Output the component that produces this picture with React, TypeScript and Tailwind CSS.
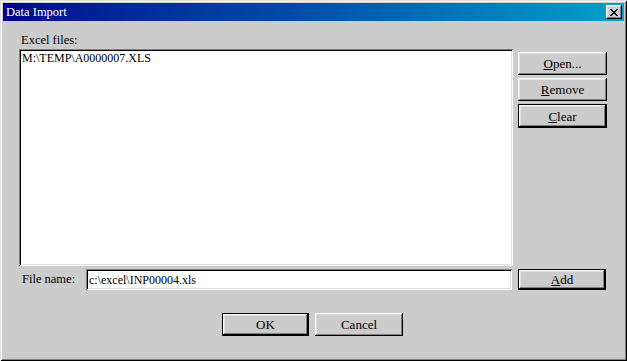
const FONT = { fontFamily: '"Liberation Serif", "Times New Roman", serif' };

function Btn({
  children,
  isDefault,
  className = "",
}: {
  children: React.ReactNode;
  isDefault?: boolean;
  className?: string;
}) {
  const bevel =
    "shadow-[inset_-1px_-1px_#000,inset_1px_1px_#fff,inset_-2px_-2px_#808080,inset_2px_2px_#dfdfdf]";
  if (isDefault) {
    return (
      <div className={`border border-black ${className}`}>
        <div
          className={`flex h-full w-full items-center justify-center bg-[#cccccc] text-[13px] leading-none text-black ${bevel}`}
        >
          {children}
        </div>
      </div>
    );
  }
  return (
    <div
      className={`flex items-center justify-center bg-[#cccccc] text-[13px] leading-none text-black ${bevel} ${className}`}
    >
      {children}
    </div>
  );
}

const sunken =
  "bg-white shadow-[inset_1px_1px_#808080,inset_-1px_-1px_#fff,inset_2px_2px_#000,inset_-2px_-2px_#dfdfdf]";

export default function App() {
  return (
    <div
      className="flex h-[361px] w-[627px] flex-col bg-[#cccccc] p-[3px] shadow-[inset_1px_1px_#dfdfdf,inset_-1px_-1px_#000,inset_2px_2px_#fff,inset_-2px_-2px_#808080]"
      style={FONT}
    >
      {/* title bar */}
      <div className="flex h-[18px] items-center justify-between bg-linear-to-r from-[#00008c] via-[#0048aa] via-45% to-[#0aa0c8] pl-[3px] pr-[2px]">
        <span className="text-[12.5px] leading-none text-white">Data Import</span>
        <div className="flex h-[14px] w-[16px] items-center justify-center bg-[#cccccc] shadow-[inset_-1px_-1px_#000,inset_1px_1px_#fff,inset_-2px_-2px_#808080,inset_2px_2px_#dfdfdf]">
          <svg width="8" height="7" viewBox="0 0 8 7" shapeRendering="crispEdges">
            <path
              d="M0 0h2v1h-2zM6 0h2v1h-2zM1 1h2v1h-2zM5 1h2v1h-2zM2 2h4v1h-4zM3 3h2v1h-2zM2 4h4v1h-4zM1 5h2v1h-2zM5 5h2v1h-2zM0 6h2v1h-2zM6 6h2v1h-2z"
              fill="#000"
            />
          </svg>
        </div>
      </div>

      {/* body */}
      <div className="flex flex-1 flex-col pl-[16px] pt-[13px]">
        <div className="grid grid-cols-[494px_89px] gap-x-[5px]">
          <div className="h-[15px] pl-[2px] text-[12.5px] leading-none text-black">Excel files:</div>
          <div />

          <div className={`h-[217px] px-[3px] pt-[3px] ${sunken}`}>
            <div className="text-[12px] leading-none text-black">M:\TEMP\A0000007.XLS</div>
          </div>
          <div className="flex flex-col gap-[3px] pt-[3px]">
            <Btn className="h-[23px]">
              <span>
                <u>O</u>pen...
              </span>
            </Btn>
            <Btn className="h-[23px]">
              <span>
                <u>R</u>emove
              </span>
            </Btn>
            <Btn isDefault className="h-[24px]">
              <span>
                <u>C</u>lear
              </span>
            </Btn>
          </div>

          <div className="mt-[3px] flex items-center">
            <span className="w-[67px] pl-[3px] text-[12.5px] leading-none text-black">File name:</span>
            <div className={`flex h-[21px] flex-1 items-center pl-[3px] ${sunken}`}>
              <span className="text-[12px] leading-none text-black">c:\excel\INP00004.xls</span>
            </div>
            <div className="w-[1px]" />
          </div>
          <div className="mt-[3px]">
            <Btn isDefault className="h-[21px] w-[88px]">
              <span>
                <u>A</u>dd
              </span>
            </Btn>
          </div>
        </div>

        <div className="mt-[23px] flex gap-[6px] pl-[203px]">
          <Btn isDefault className="h-[23px] w-[87px]">
            OK
          </Btn>
          <Btn className="h-[23px] w-[88px]">Cancel</Btn>
        </div>
      </div>
    </div>
  );
}
